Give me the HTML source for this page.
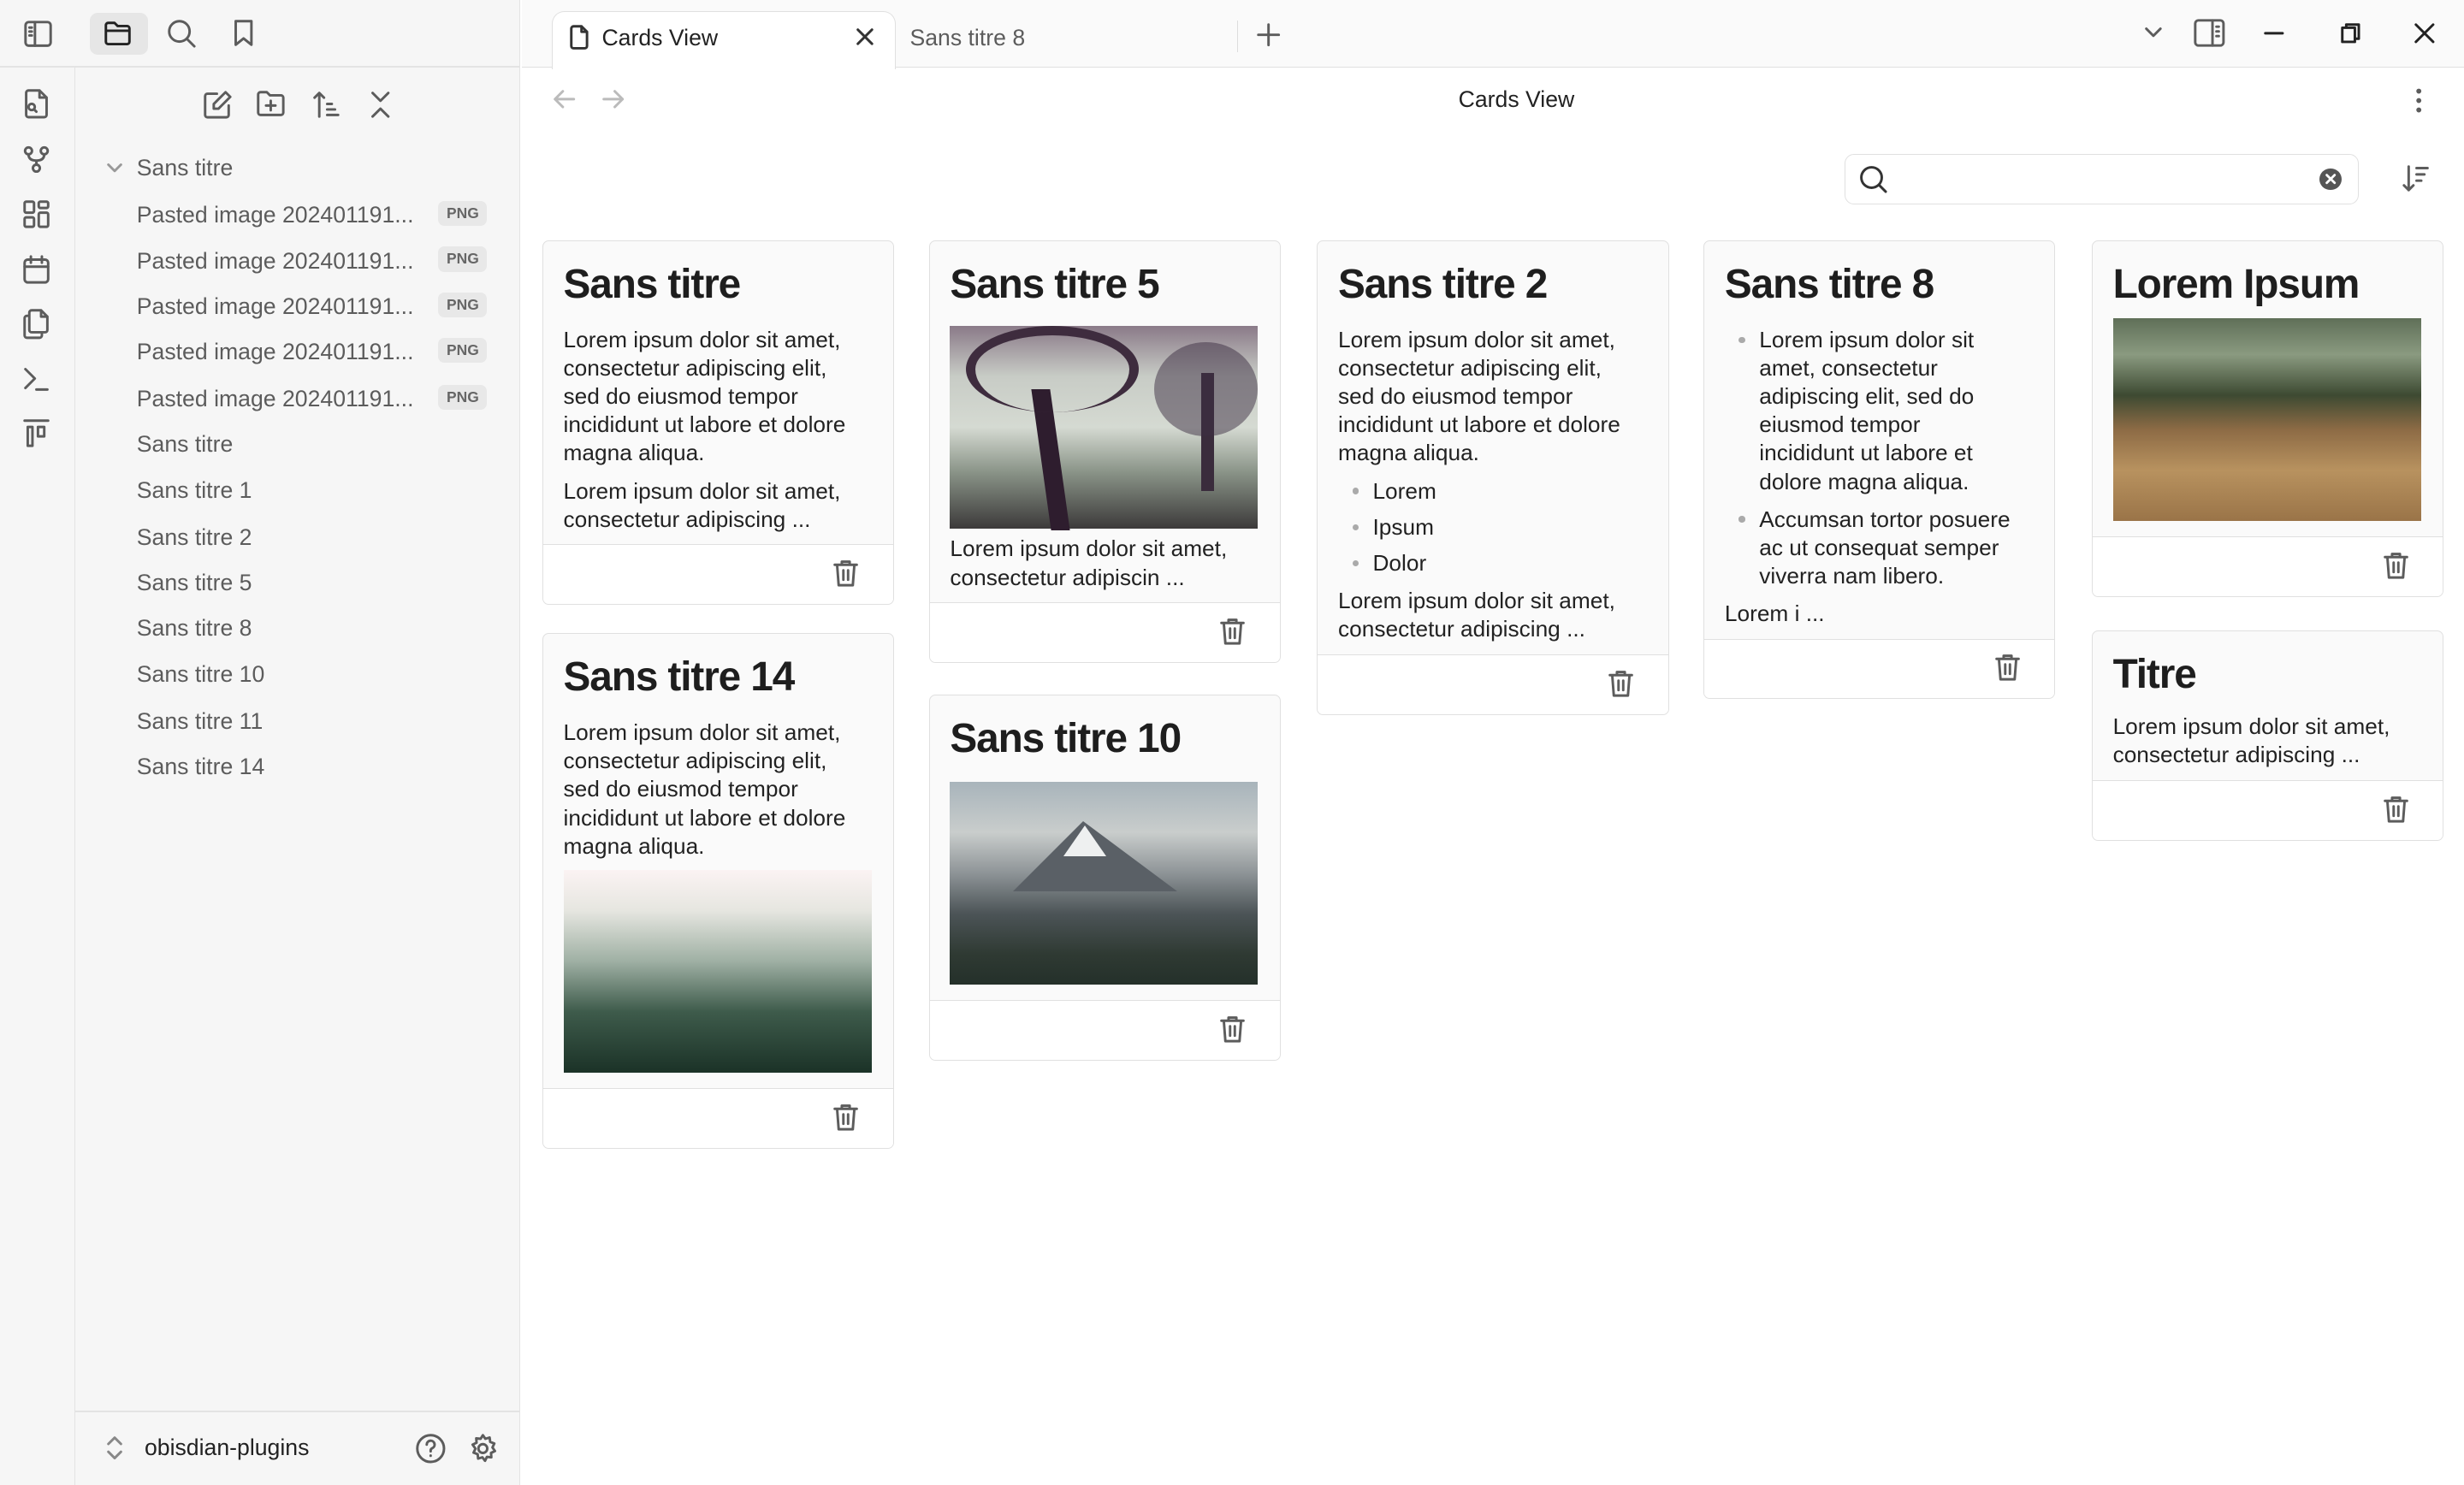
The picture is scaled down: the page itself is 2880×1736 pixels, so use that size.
<!DOCTYPE html>
<html><head><meta charset="utf-8"><style>
*{box-sizing:border-box;margin:0;padding:0}
html,body{width:2880px;height:1736px;overflow:hidden;background:#fff}
#w{zoom:1.83673;width:1568px;height:945px;position:relative;font-family:"Liberation Sans",sans-serif;color:#222;overflow:hidden}
.a{position:absolute}
svg{position:absolute;fill:none;stroke:#5c5c5c;stroke-width:1.6;stroke-linecap:round;stroke-linejoin:round}
.side{left:0;top:0;width:331px;height:945px;background:#f6f6f6;border-right:1px solid #e3e3e3}
.rib{left:0;top:43px;width:48px;height:902px;border-right:1px solid #e3e3e3}
.topl{left:0;top:42px;width:331px;height:1px;background:#e3e3e3}
.tabbar{left:332px;top:0;width:1236px;height:43px;background:#fafafa;border-bottom:1px solid #e0e0e0}
.tab{left:351px;top:7px;width:219px;height:37px;background:#fff;border:1px solid #e0e0e0;border-bottom:none;border-radius:8px 8px 0 0}
.fi{left:87px;font-size:14.5px;color:#5c5c5c;line-height:20px}
.png{left:279px;width:31px;height:16px;background:#e8e8e8;border-radius:4px;font-size:9.5px;font-weight:bold;color:#666;text-align:center;line-height:16px}
.card{width:224px;background:#fafafa;border:1px solid #e0e0e0;border-radius:4px;overflow:hidden}
.card .in{padding:12px 10px 7px 13px}
.card h1{font-size:26px;line-height:32px;font-weight:bold;letter-spacing:-0.6px;margin-bottom:10px;color:#1e1e1e}
.card p{font-size:14.3px;line-height:18px;margin-bottom:6px;color:#222;white-space:nowrap}
.card p:last-child{margin-bottom:0}
.card ul{list-style:none;margin-bottom:6px}
.card li{font-size:14.3px;line-height:18px;position:relative;padding-left:22px;margin-bottom:6px;white-space:nowrap}
.card li:before{content:"";position:absolute;left:9px;top:7px;width:4px;height:4px;border-radius:2px;background:#aaa}
.card .im{width:196px;height:129px;margin-bottom:7px}
.card .ft{background:#fff;border-top:1px solid #e0e0e0;height:38px;position:relative}
.card .ft svg{right:21px;top:8px}
</style></head><body><div id="w">
<div class="a side"></div>
<div class="a topl"></div>
<div class="a rib"></div>
<div class="a tabbar"></div>
<div class="a tab"></div>

<svg style="left:15px;top:13px" width="18" height="17" viewBox="0 0 18 17"><rect x="1" y="1" width="16" height="15" rx="2"/><path d="M7 1v15M3.5 4.5h1.5M3.5 7h1.5M3.5 9.5h1.5"/></svg>
<div class="a" style="left:57px;top:8px;width:37px;height:27px;background:#e6e6e6;border-radius:5px"></div>
<svg style="left:66px;top:13px" width="18" height="16" viewBox="0 0 18 16"><path d="M1.5 3a1.5 1.5 0 0 1 1.5-1.5h4l2 2h6a1.5 1.5 0 0 1 1.5 1.5v8.5a1.5 1.5 0 0 1-1.5 1.5H3a1.5 1.5 0 0 1-1.5-1.5zM1.5 6.5h15" stroke="#222"/></svg>
<svg style="left:106px;top:12px" width="19" height="19" viewBox="0 0 19 19"><circle cx="8" cy="8" r="6.5"/><path d="M13 13l4.5 4.5"/></svg>
<svg style="left:147px;top:12px" width="16" height="18" viewBox="0 0 16 18"><path d="M3 1.5h10v15l-5-4-5 4z"/></svg>

<svg style="left:14px;top:56px" width="18" height="20" viewBox="0 0 18 20"><path d="M11 1.5H4a1.5 1.5 0 0 0-1.5 1.5v14A1.5 1.5 0 0 0 4 18.5h10a1.5 1.5 0 0 0 1.5-1.5V6zM11 1.5V6h4.5"/><circle cx="6" cy="12" r="2"/><path d="M7.5 13.5l1.5 1.5"/></svg>
<svg style="left:14px;top:92px" width="18" height="20" viewBox="0 0 18 20"><circle cx="4" cy="4" r="2.2"/><circle cx="14" cy="4" r="2.2"/><circle cx="9" cy="15" r="2.2"/><path d="M4 6.2q0 4 5 4t5-4M9 10.2v2.6"/></svg>
<svg style="left:14px;top:127px" width="18" height="19" viewBox="0 0 18 19"><rect x="1.5" y="1.5" width="6" height="7" rx="1"/><rect x="10.5" y="1.5" width="6" height="4" rx="1"/><rect x="1.5" y="11.5" width="6" height="6" rx="1"/><rect x="10.5" y="8.5" width="6" height="9" rx="1"/></svg>
<svg style="left:14px;top:162px" width="18" height="19" viewBox="0 0 18 19"><rect x="1.5" y="3" width="15" height="14.5" rx="2"/><path d="M1.5 7.5h15M5.5 1v4M12.5 1v4"/></svg>
<svg style="left:14px;top:196px" width="18" height="20" viewBox="0 0 18 20"><path d="M6 1.5h6l4 4V14a1.5 1.5 0 0 1-1.5 1.5H6A1.5 1.5 0 0 1 4.5 14V3A1.5 1.5 0 0 1 6 1.5zM12 1.5v4h4M4.5 5H3A1.5 1.5 0 0 0 1.5 6.5v11A1.5 1.5 0 0 0 3 19h8a1.5 1.5 0 0 0 1.5-1.5v-2"/></svg>
<svg style="left:14px;top:232px" width="18" height="18" viewBox="0 0 18 18"><path d="M2 3l6 6-6 6M9 16h7"/></svg>
<svg style="left:14px;top:266px" width="18" height="20" viewBox="0 0 18 20"><path d="M1.5 1.5h15M3.5 5.5h3v12h-3zM10 5.5h4v6h-4z"/></svg>

<svg style="left:129px;top:57px" width="19" height="19" viewBox="0 0 19 19"><path d="M9 2.5H3a1.5 1.5 0 0 0-1.5 1.5v12A1.5 1.5 0 0 0 3 17.5h12a1.5 1.5 0 0 0 1.5-1.5v-6M14.5 1.5l3 3-7.5 7.5H7V9z"/></svg>
<svg style="left:163px;top:57px" width="19" height="18" viewBox="0 0 19 18"><path d="M1.5 3a1.5 1.5 0 0 1 1.5-1.5h4l2 2h7a1.5 1.5 0 0 1 1.5 1.5v9.5a1.5 1.5 0 0 1-1.5 1.5H3a1.5 1.5 0 0 1-1.5-1.5zM9.5 7v6M6.5 10h6"/></svg>
<svg style="left:198px;top:57px" width="19" height="19" viewBox="0 0 19 19"><path d="M5 17V2M2 5l3-3 3 3M10 9h3M10 12.5h5M10 16h7"/></svg>
<svg style="left:234px;top:57px" width="16" height="19" viewBox="0 0 16 19"><path d="M3 2l5 5 5-5M3 17l5-5 5 5"/></svg>

<svg style="left:67px;top:102px" width="12" height="10" viewBox="0 0 12 10"><path d="M2 3l4 4 4-4" stroke="#999"/></svg>
<div class="a fi" style="top:97px">Sans titre</div>
<div class="a fi" style="top:127px">Pasted image 202401191...</div><div class="a png" style="top:128px">PNG</div>
<div class="a fi" style="top:156px">Pasted image 202401191...</div><div class="a png" style="top:157px">PNG</div>
<div class="a fi" style="top:185px">Pasted image 202401191...</div><div class="a png" style="top:186px">PNG</div>
<div class="a fi" style="top:214px">Pasted image 202401191...</div><div class="a png" style="top:215px">PNG</div>
<div class="a fi" style="top:244px">Pasted image 202401191...</div><div class="a png" style="top:245px">PNG</div>
<div class="a fi" style="top:273px">Sans titre</div>
<div class="a fi" style="top:302px">Sans titre 1</div>
<div class="a fi" style="top:332px">Sans titre 2</div>
<div class="a fi" style="top:361px">Sans titre 5</div>
<div class="a fi" style="top:390px">Sans titre 8</div>
<div class="a fi" style="top:419px">Sans titre 10</div>
<div class="a fi" style="top:449px">Sans titre 11</div>
<div class="a fi" style="top:478px">Sans titre 14</div>

<div class="a" style="left:48px;top:898px;width:283px;height:1px;background:#e3e3e3"></div>
<svg style="left:67px;top:913px" width="12" height="17" viewBox="0 0 12 17"><path d="M2 6l4-4 4 4M2 11l4 4 4-4" stroke="#888"/></svg>
<div class="a" style="left:92px;top:913px;font-size:14.5px;color:#222">obisdian-plugins</div>
<svg style="left:264px;top:912px" width="20" height="20" viewBox="0 0 20 20"><circle cx="10" cy="10" r="8.5"/><path d="M7.5 7.5a2.5 2.5 0 1 1 3.5 2.3c-.7.3-1 .8-1 1.5v.5M10 14.5v.1"/></svg>
<svg style="left:297px;top:912px" width="20" height="20" viewBox="0 0 20 20"><circle cx="10" cy="10" r="2.8"/><path d="M10 1.5l1.6 2.3 2.7-.8.4 2.8 2.6 1-1.2 2.5 1.6 2.3-2.5 1.2.2 2.8-2.8-.3-1.2 2.5-1.7-2.2-2.7.8-.3-2.8-2.6-1 1.2-2.5L3.5 7.5 6 6.3 5.8 3.5l2.8.3z"/></svg>

<svg style="left:362px;top:15px" width="13" height="17" viewBox="0 0 13 17"><path d="M8 1.5H3A1.5 1.5 0 0 0 1.5 3v11A1.5 1.5 0 0 0 3 15.5h7a1.5 1.5 0 0 0 1.5-1.5V5zM8 1.5V5h3.5" stroke="#333"/></svg>
<div class="a" style="left:383px;top:16px;font-size:14.5px;color:#222">Cards View</div>
<svg style="left:544px;top:17px" width="13" height="13" viewBox="0 0 13 13"><path d="M2 2l9 9M11 2l-9 9" stroke="#333"/></svg>
<div class="a" style="left:579px;top:16px;font-size:14.5px;color:#5c5c5c">Sans titre 8</div>
<div class="a" style="left:787px;top:13px;width:1px;height:20px;background:#ddd"></div>
<svg style="left:799px;top:14px" width="16" height="16" viewBox="0 0 16 16"><path d="M8 1.5v13M1.5 8h13"/></svg>
<svg style="left:1364px;top:16px" width="13" height="10" viewBox="0 0 13 10"><path d="M2 2.5l4.5 4.5 4.5-4.5"/></svg>
<svg style="left:1396px;top:12px" width="20" height="18" viewBox="0 0 20 18"><rect x="1" y="1" width="18" height="16" rx="2"/><path d="M12 1v16M14.5 5h1.5M14.5 8h1.5M14.5 11h1.5"/></svg>
<svg style="left:1440px;top:14px" width="14" height="14" viewBox="0 0 14 14"><path d="M1.5 7h11" stroke="#222"/></svg>
<svg style="left:1489px;top:14px" width="14" height="14" viewBox="0 0 14 14"><rect x="1.5" y="3.5" width="8" height="9" stroke="#222" stroke-linecap="butt"/><path d="M4 3.5V1.5h8v9h-2.5" stroke="#222" stroke-linecap="butt"/></svg>
<svg style="left:1536px;top:14px" width="14" height="14" viewBox="0 0 14 14"><path d="M1.5 1.5l11 11M12.5 1.5l-11 11" stroke="#222"/></svg>

<svg style="left:351px;top:56px" width="16" height="14" viewBox="0 0 16 14"><path d="M14 7H2M7 2L2 7l5 5" stroke="#bbb"/></svg>
<svg style="left:382px;top:56px" width="16" height="14" viewBox="0 0 16 14"><path d="M2 7h12M9 2l5 5-5 5" stroke="#bbb"/></svg>
<div class="a" style="left:865px;top:55px;width:200px;text-align:center;font-size:14.5px;color:#222">Cards View</div>
<svg style="left:1534px;top:55px" width="10" height="18" viewBox="0 0 10 18"><circle cx="5" cy="3" r=".8"/><circle cx="5" cy="9" r=".8"/><circle cx="5" cy="15" r=".8"/></svg>

<div class="a" style="left:1174px;top:98px;width:327px;height:32px;border:1px solid #e0e0e0;border-radius:6px;background:#fff"></div>
<svg style="left:1182px;top:104px" width="20" height="20" viewBox="0 0 20 20"><circle cx="9" cy="9" r="6.5" stroke="#333"/><path d="M14 14l4 4" stroke="#333"/></svg>
<div class="a" style="left:1476px;top:107px;width:14px;height:14px;border-radius:7px;background:#555"></div>
<svg style="left:1478px;top:109px" width="10" height="10" viewBox="0 0 10 10"><path d="M2.5 2.5l5 5M7.5 2.5l-5 5" stroke="#fff" stroke-width="1.5"/></svg>
<svg style="left:1529px;top:104px" width="18" height="20" viewBox="0 0 18 20"><path d="M4 2v15M1 14l3 3 3-3M9 3h7M9 7h5M9 11h3"/></svg>

<div class="a card" style="left:345px;top:153px">
 <div class="in"><h1>Sans titre</h1>
 <p>Lorem ipsum dolor sit amet,<br>consectetur adipiscing elit,<br>sed do eiusmod tempor<br>incididunt ut labore et dolore<br>magna aliqua.</p>
 <p>Lorem ipsum dolor sit amet,<br>consectetur adipiscing ...</p></div>
 <div class="ft"><svg width="18" height="19" viewBox="0 0 18 19"><path d="M2 4.5h14M6.5 4.5V2.5h5v2M3.5 4.5l1 13h9l1-13M7.5 8v6M10.5 8v6"/></svg></div>
</div>
<div class="a card" style="left:345px;top:403px">
 <div class="in"><h1>Sans titre 14</h1>
 <p>Lorem ipsum dolor sit amet,<br>consectetur adipiscing elit,<br>sed do eiusmod tempor<br>incididunt ut labore et dolore<br>magna aliqua.</p>
 <div class="im" style="margin-top:6px;margin-bottom:3px;background:linear-gradient(180deg,#fbf3f3 0%,#e6e6e0 20%,#9fb0a4 45%,#3e5b4b 70%,#1b3227 100%)"></div></div>
 <div class="ft"><svg width="18" height="19" viewBox="0 0 18 19"><path d="M2 4.5h14M6.5 4.5V2.5h5v2M3.5 4.5l1 13h9l1-13M7.5 8v6M10.5 8v6"/></svg></div>
</div>

<div class="a card" style="left:591px;top:153px">
 <div class="in"><h1>Sans titre 5</h1>
 <div class="im" style="margin-bottom:4px;position:relative;background:linear-gradient(180deg,#8a7a88 0%,#c8ccc6 25%,#d5dad2 50%,#8a9488 72%,#3c3a3a 100%)"><div style="position:absolute;left:58px;top:40px;width:12px;height:90px;background:#2e1d2e;transform:skewX(8deg)"></div><div style="position:absolute;left:10px;top:0;width:110px;height:55px;border-radius:50%;border:6px solid #3e2c3e;border-bottom:none"></div><div style="position:absolute;left:160px;top:30px;width:8px;height:75px;background:#3a2c3c"></div><div style="position:absolute;left:130px;top:10px;width:66px;height:60px;border-radius:50%;background:rgba(60,45,65,.5)"></div></div>
 <p>Lorem ipsum dolor sit amet,<br>consectetur adipiscin ...</p></div>
 <div class="ft"><svg width="18" height="19" viewBox="0 0 18 19"><path d="M2 4.5h14M6.5 4.5V2.5h5v2M3.5 4.5l1 13h9l1-13M7.5 8v6M10.5 8v6"/></svg></div>
</div>
<div class="a card" style="left:591px;top:442px">
 <div class="in"><h1>Sans titre 10</h1>
 <div class="im" style="margin-top:11px;margin-bottom:3px;position:relative;background:linear-gradient(180deg,#a8b4bb 0%,#c9cdcc 25%,#8e9497 45%,#4c5457 65%,#2f3a33 85%,#24302a 100%)"><div style="position:absolute;left:40px;top:25px;width:0;height:0;border-left:45px solid transparent;border-right:60px solid transparent;border-bottom:45px solid #5a6066"></div><div style="position:absolute;left:72px;top:28px;width:0;height:0;border-left:14px solid transparent;border-right:14px solid transparent;border-bottom:20px solid #eef0f0"></div></div></div>
 <div class="ft"><svg width="18" height="19" viewBox="0 0 18 19"><path d="M2 4.5h14M6.5 4.5V2.5h5v2M3.5 4.5l1 13h9l1-13M7.5 8v6M10.5 8v6"/></svg></div>
</div>

<div class="a card" style="left:838px;top:153px">
 <div class="in"><h1>Sans titre 2</h1>
 <p>Lorem ipsum dolor sit amet,<br>consectetur adipiscing elit,<br>sed do eiusmod tempor<br>incididunt ut labore et dolore<br>magna aliqua.</p>
 <ul><li style="margin-bottom:5px">Lorem</li><li style="margin-bottom:5px">Ipsum</li><li>Dolor</li></ul>
 <p>Lorem ipsum dolor sit amet,<br>consectetur adipiscing ...</p></div>
 <div class="ft"><svg width="18" height="19" viewBox="0 0 18 19"><path d="M2 4.5h14M6.5 4.5V2.5h5v2M3.5 4.5l1 13h9l1-13M7.5 8v6M10.5 8v6"/></svg></div>
</div>

<div class="a card" style="left:1084px;top:153px">
 <div class="in"><h1>Sans titre 8</h1>
 <ul><li>Lorem ipsum dolor sit<br>amet, consectetur<br>adipiscing elit, sed do<br>eiusmod tempor<br>incididunt ut labore et<br>dolore magna aliqua.</li><li>Accumsan tortor posuere<br>ac ut consequat semper<br>viverra nam libero.</li></ul>
 <p>Lorem i ...</p></div>
 <div class="ft"><svg width="18" height="19" viewBox="0 0 18 19"><path d="M2 4.5h14M6.5 4.5V2.5h5v2M3.5 4.5l1 13h9l1-13M7.5 8v6M10.5 8v6"/></svg></div>
</div>

<div class="a card" style="left:1331px;top:153px">
 <div class="in"><h1 style="margin-bottom:5px">Lorem Ipsum</h1>
 <div class="im" style="margin-bottom:3px;background:linear-gradient(180deg,#5f6f58 0%,#8a9a80 18%,#3d4a32 38%,#8d6b45 55%,#b8925f 75%,#9a7448 100%)"></div></div>
 <div class="ft"><svg width="18" height="19" viewBox="0 0 18 19"><path d="M2 4.5h14M6.5 4.5V2.5h5v2M3.5 4.5l1 13h9l1-13M7.5 8v6M10.5 8v6"/></svg></div>
</div>
<div class="a card" style="left:1331px;top:401px">
 <div class="in"><h1 style="margin-bottom:8px">Titre</h1>
 <p>Lorem ipsum dolor sit amet,<br>consectetur adipiscing ...</p></div>
 <div class="ft"><svg width="18" height="19" viewBox="0 0 18 19"><path d="M2 4.5h14M6.5 4.5V2.5h5v2M3.5 4.5l1 13h9l1-13M7.5 8v6M10.5 8v6"/></svg></div>
</div>
</div></body></html>
